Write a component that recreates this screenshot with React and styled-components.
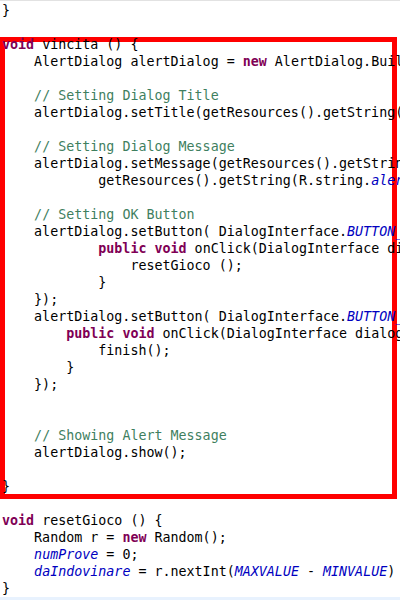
import styled, { createGlobalStyle } from "styled-components";

const GlobalStyle = createGlobalStyle`
  html, body {
    margin: 0;
    padding: 0;
    background: #fff;
  }
`;

const Editor = styled.div`
  position: relative;
  width: 400px;
  height: 600px;
  overflow: hidden;
  background: #fff;
  border-top: 1px solid #e2e2e2;
  box-sizing: border-box;
`;

// the red frame drawn over the screenshot
const Highlight = styled.div`
  position: absolute;
  left: 0;
  top: 36px;
  width: 397px;
  height: 462px;
  border: 5px solid #ff0000;
  box-sizing: border-box;
  z-index: 0;
`;

const Code = styled.div`
  position: relative;
  z-index: 1;
  padding-top: 1px;
  font-family: "DejaVu Sans Mono", "Liberation Mono", monospace;
  font-size: 13.33px;
  color: #000;
`;

const Line = styled.div`
  height: 17px;
  line-height: 17px;
  padding-left: 2px;
  white-space: pre;
  background: ${(p) => (p.current ? "#e8f2fe" : "transparent")};
`;

const Kw = styled.span`
  color: #7f0055;
  font-weight: bold;
`;

const Cm = styled.span`
  color: #3f7f5f;
`;

const St = styled.span`
  color: #0000c0;
  font-style: italic;
`;

const Str = styled.span`
  color: #2a00ff;
`;

export default function App() {
  return (
    <Editor>
      <GlobalStyle />
      <Highlight />
      <Code>
        <Line>{"}"}</Line>
        <Line />
        <Line><Kw>void</Kw>{" vincita () {"}</Line>
        <Line>{"    AlertDialog alertDialog = "}<Kw>new</Kw>{" AlertDialog.Builder("}<Kw>this</Kw>{").create();"}</Line>
        <Line />
        <Line>{"    "}<Cm>// Setting Dialog Title</Cm></Line>
        <Line>{"    alertDialog.setTitle(getResources().getString(R.string."}<St>alert_title</St>{"));"}</Line>
        <Line />
        <Line>{"    "}<Cm>// Setting Dialog Message</Cm></Line>
        <Line>{"    alertDialog.setMessage(getResources().getString(R.string."}<St>alert_msg</St>{") +"}</Line>
        <Line>{"            getResources().getString(R.string."}<St>alert_msg2</St>{"));"}</Line>
        <Line />
        <Line>{"    "}<Cm>// Setting OK Button</Cm></Line>
        <Line>{"    alertDialog.setButton( DialogInterface."}<St>BUTTON_POSITIVE</St>{", "}<Str>"Si"</Str>{", "}<Kw>new</Kw>{" DialogInterface.OnClickListener() {"}</Line>
        <Line>{"            "}<Kw>public</Kw>{" "}<Kw>void</Kw>{" onClick(DialogInterface dialog, "}<Kw>int</Kw>{" which) {"}</Line>
        <Line>{"                resetGioco ();"}</Line>
        <Line>{"            }"}</Line>
        <Line>{"    });"}</Line>
        <Line>{"    alertDialog.setButton( DialogInterface."}<St>BUTTON_NEGATIVE</St>{", "}<Str>"No"</Str>{", "}<Kw>new</Kw>{" DialogInterface.OnClickListener() {"}</Line>
        <Line>{"        "}<Kw>public</Kw>{" "}<Kw>void</Kw>{" onClick(DialogInterface dialog, "}<Kw>int</Kw>{" which) {"}</Line>
        <Line>{"            finish();"}</Line>
        <Line>{"        }"}</Line>
        <Line>{"    });"}</Line>
        <Line />
        <Line />
        <Line>{"    "}<Cm>// Showing Alert Message</Cm></Line>
        <Line>{"    alertDialog.show();"}</Line>
        <Line />
        <Line>{"}"}</Line>
        <Line />
        <Line><Kw>void</Kw>{" resetGioco () {"}</Line>
        <Line>{"    Random r = "}<Kw>new</Kw>{" Random();"}</Line>
        <Line>{"    "}<St>numProve</St>{" = 0;"}</Line>
        <Line>{"    "}<St>daIndovinare</St>{" = r.nextInt("}<St>MAXVALUE</St>{" - "}<St>MINVALUE</St>{") + "}<St>MINVALUE</St>{";"}</Line>
        <Line>{"}"}</Line>
        <Line current />
      </Code>
    </Editor>
  );
}
